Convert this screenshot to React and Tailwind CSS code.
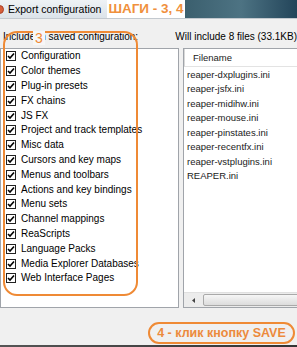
import React from 'react';

const options = [
  'Configuration', 'Color themes', 'Plug-in presets', 'FX chains', 'JS FX',
  'Project and track templates', 'Misc data', 'Cursors and key maps',
  'Menus and toolbars', 'Actions and key bindings', 'Menu sets',
  'Channel mappings', 'ReaScripts', 'Language Packs',
  'Media Explorer Databases', 'Web Interface Pages',
];

const files = [
  'reaper-dxplugins.ini', 'reaper-jsfx.ini', 'reaper-midihw.ini', 'reaper-mouse.ini',
  'reaper-pinstates.ini', 'reaper-recentfx.ini', 'reaper-vstplugins.ini', 'REAPER.ini',
];

function Check() {
  return (
    <span className="w-[10px] h-[10px] border border-[#222] bg-white flex items-center justify-center shrink-0">
      <svg width="8" height="8" viewBox="0 0 8 8">
        <polyline points="1,4 3,6 7,1.5" fill="none" stroke="#000" strokeWidth="1.6" />
      </svg>
    </span>
  );
}

export default function App() {
  return (
    <div className="w-[297px] h-[347px] overflow-hidden bg-[#f0f0f0] flex flex-col relative font-['Liberation_Sans',Arial,sans-serif] text-black">
      {/* title bar */}
      <div className="h-[19px] flex shrink-0 border-b border-[#c3c9cf]">
        <div className="w-[107px] flex items-center bg-gradient-to-b from-[#eef2f5] to-[#dce3e9] relative overflow-hidden">
          <span className="absolute left-[-5px] top-[5px] w-[9px] h-[9px] rounded-full bg-[#d9603a] border border-[#a8412a]" />
          <span className="ml-[8px] text-[10.5px] leading-none">Export configuration</span>
        </div>
        <div className="w-[78px] bg-white flex items-center justify-center text-[#f0903c] font-bold text-[13.5px] leading-none">ШАГИ - 3, 4</div>
        <div className="flex-1 bg-gradient-to-r from-[#3b5f6e] via-[#4d7383] to-[#23455a]" />
      </div>

      {/* labels */}
      <div className="h-[29px] flex shrink-0 text-[10px] leading-none">
        <div className="w-[183px] pl-[3px] pt-[13px]">Include in saved configuration:</div>
        <div className="pl-[4px] pt-[13px] whitespace-nowrap">Will include 8 files (33.1KB)</div>
      </div>

      {/* lists */}
      <div className="h-[260px] flex gap-[4px] shrink-0">
        <div className="w-[179px] bg-white border border-[#a0a4aa] overflow-hidden text-[10px] leading-none">
          {options.map(o => (
            <div key={o} className="h-[14.8px] flex items-center whitespace-nowrap">
              <span className="ml-[5px]"><Check /></span>
              <span className="ml-[5px]">{o}</span>
            </div>
          ))}
        </div>
        <div className="flex-1 mr-[-6px] bg-white border border-[#a0a4aa] flex flex-col text-[9.5px] leading-none text-[#1a1a1a]">
          <div className="h-[18px] shrink-0 flex items-center pl-[8px] border-b border-[#e3e3e3] border-l border-l-[#d8d8d8]">Filename</div>
          {files.map(f => (
            <div key={f} className="h-[14.5px] flex items-center pl-[3px] whitespace-nowrap">{f}</div>
          ))}
          <div className="mt-auto h-[15px] bg-[#ececec] flex items-center border-t border-[#e0e0e0]">
            <svg width="16" height="15" viewBox="0 0 16 15" className="shrink-0 ml-[2px]">
              <polygon points="9,5 6,7.5 9,10" fill="#444" />
            </svg>
            <div className="flex-1 h-[12px] ml-[1px] rounded-[2px] border border-[#a9a9a9] bg-gradient-to-b from-[#f6f6f6] to-[#dcdcdc]" />
          </div>
        </div>
      </div>

      {/* bottom */}
      <div className="flex-1 flex justify-end items-start pt-[14px] pr-[2px]">
        <div className="h-[22px] w-[147px] border-[2.5px] border-[#ef8a35] rounded-[11px] flex items-center justify-center text-[#ec8a3c] font-bold text-[12.5px] whitespace-nowrap">4 - клик кнопку SAVE</div>
      </div>
      <div className="h-[2px] shrink-0 bg-gradient-to-r from-[#555] to-[#333]" />

      {/* annotation overlay on the options list */}
      <div className="absolute left-[3px] top-[31px] w-[135px] h-[265px] border-[2.5px] border-[#ef8a35] rounded-[14px] pointer-events-none" />
      <div className="absolute left-[33px] top-[31px] w-[12px] h-[14px] bg-[#f7f7f7] text-[#ef8a35] text-[14px] leading-none flex items-center justify-center">3</div>
    </div>
  );
}
